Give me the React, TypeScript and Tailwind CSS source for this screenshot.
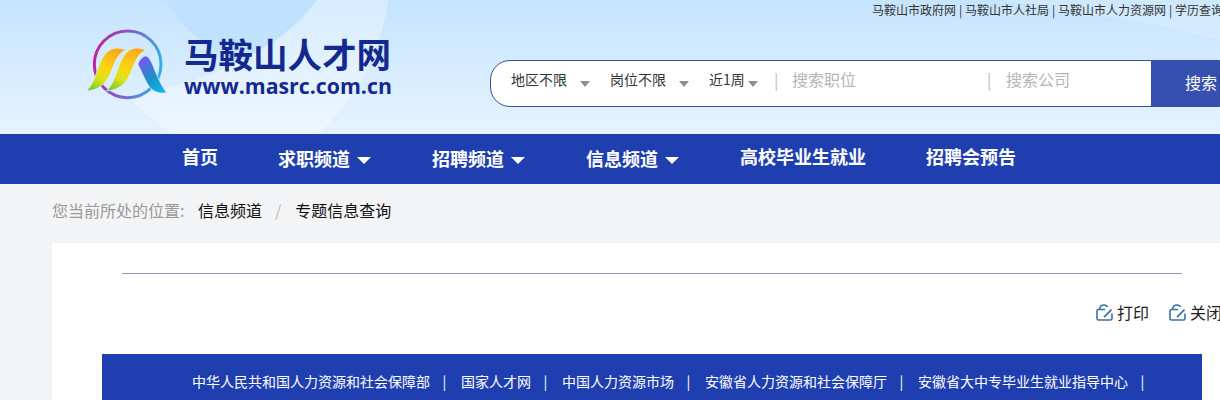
const sans = 'font-["Noto_Sans_CJK_SC","Liberation_Sans",sans-serif]'

const navItems = [
  { label: '首页', left: 'w-[96px] -mt-[6px]', caret: false },
  { label: '求职频道', left: 'w-[154px] -mt-[2px]', caret: true },
  { label: '招聘频道', left: 'w-[154px] -mt-[2px]', caret: true },
  { label: '信息频道', left: 'w-[154px] -mt-[2px]', caret: true },
  { label: '高校毕业生就业', left: 'w-[186px] -mt-[6px]', caret: false },
  { label: '招聘会预告', left: 'w-[120px] -mt-[6px]', caret: false },
]

const links = [
  '中华人民共和国人力资源和社会保障部',
  '国家人才网',
  '中国人力资源市场',
  '安徽省人力资源和社会保障厅',
  '安徽省大中专毕业生就业指导中心',
]

function Logo() {
  return (
    <svg viewBox="0 0 300 240" className="w-[100px] h-[80px] shrink-0">
      <defs>
        <linearGradient id="ring" x1="0" y1="0.3" x2="1" y2="0.5">
          <stop offset="0" stopColor="#c21f9c" />
          <stop offset="0.5" stopColor="#7f62c8" />
          <stop offset="1" stopColor="#2fb2ec" />
        </linearGradient>
        <linearGradient id="leaf" x1="0.7" y1="0" x2="0.2" y2="1">
          <stop offset="0" stopColor="#fba91c" />
          <stop offset="0.45" stopColor="#fbd512" />
          <stop offset="0.72" stopColor="#dce31a" />
          <stop offset="1" stopColor="#7fcb2f" />
        </linearGradient>
        <linearGradient id="blade" x1="0.2" y1="0" x2="0.8" y2="1">
          <stop offset="0" stopColor="#7a55ee" />
          <stop offset="0.55" stopColor="#1c8fc8" />
          <stop offset="1" stopColor="#10b4e4" />
        </linearGradient>
      </defs>
      <circle cx="143" cy="118" r="100" fill="none" stroke="url(#ring)" strokeWidth="9" />
      {/* halo keeps the ring from touching the leaf tips */}
      <path d="M22 197C36 182 46 160 55 130C66 98 82 72 104 71C118 70 128 72 136 76C118 82 108 100 97 128C82 168 66 192 22 197Z" fill="url(#leaf)" stroke="#dceeff" strokeWidth="4" paintOrder="stroke" />
      <path d="M82 197C96 182 106 160 115 130C126 98 142 72 164 71C178 70 188 72 196 76C178 82 168 100 157 128C142 168 126 192 82 197Z" fill="url(#leaf)" stroke="#dceeff" strokeWidth="4" paintOrder="stroke" />
      <path d="M175 118C178 108 188 94 198 94C206 96 212 108 218 122C228 148 242 180 258 202C236 206 218 198 208 184C196 166 186 140 175 118Z" fill="url(#blade)" stroke="#dceeff" strokeWidth="4" paintOrder="stroke" />
    </svg>
  )
}

function PrintIcon() {
  return (
    <svg viewBox="0 0 17 17" className="w-[17px] h-[17px] shrink-0" fill="none" stroke="#3d6fa8" strokeWidth="1.6">
      <path d="M9 5.5H2.6C1.7 5.5 1 6.2 1 7.1V14.4C1 15.3 1.7 16 2.6 16H14.4C15.3 16 16 15.3 16 14.4V9.5" />
      <path d="M3.5 5.5C3.7 2.8 5.5 1 8 1C9.6 1 10.8 1.7 11.6 2.9" />
      <path d="M8 13.2L15.5 5.7" strokeWidth="1.8" />
    </svg>
  )
}

function Caret({ close }: { close?: boolean }) {
  return (
    <span className={`${close ? 'ml-[3px]' : 'ml-[13px]'} mt-[10px] border-x-[5px] border-t-[6px] border-x-transparent border-t-[#8f8f8f]`} />
  )
}

export default function App() {
  return (
    <div className={`${sans} w-[1220px] h-[400px] overflow-hidden bg-[#f3f4f6] text-[#333]`}>
      {/* Header */}
      <header className="relative h-[134px] overflow-hidden bg-gradient-to-b from-[#c5e4fe] to-[#e6f3ff]">
        <svg viewBox="0 0 1220 134" className="absolute inset-0 w-full h-full">
          <path d="M388 0C382 50 356 100 318 134H172C150 118 136 106 128 96C170 90 215 75 245 58C280 40 305 20 316 0Z" fill="#ffffff" fillOpacity="0.32" />
          <path d="M165 0C185 30 205 50 240 62C270 45 300 25 316 0Z" fill="#bcdffd" fillOpacity="0.7" />
          <path d="M1000 0H1220V40C1150 20 1070 12 1000 0Z" fill="#ffffff" fillOpacity="0.16" />
        </svg>
        <div className="relative">
          <div className="pl-[872px] whitespace-nowrap text-xs leading-5 h-5 [word-spacing:0.2px]">
            马鞍山市政府网 | 马鞍山市人社局 | 马鞍山市人力资源网 | 学历查询
          </div>
          <div className="flex items-start">
            <div className="ml-[80px] mt-[5px] w-[100px]">
              <Logo />
            </div>
            <div className="ml-[4px] mt-[13px] w-[306px] text-[#14298f]">
              <div className="text-[34.5px] leading-[40px] font-bold whitespace-nowrap">马鞍山人才网</div>
              <div className="text-[21.3px] leading-[26px] font-bold font-['Open_Sans'] whitespace-nowrap">www.masrc.com.cn</div>
            </div>
            {/* Search */}
            <div className="mt-[40px] flex h-[47px] w-[730px] shrink-0 rounded-l-[20px] border border-[#34509f] bg-white">
              <div className="flex items-center pl-[20px] w-[660px] pb-[9px]">
                <span className="flex items-center w-[99px] text-sm text-[#333]">地区不限<Caret /></span>
                <span className="flex items-center w-[99px] text-sm text-[#333]">岗位不限<Caret /></span>
                <span className="flex items-center w-[65px] text-sm text-[#333]">近1周<Caret close /></span>
                <span className="text-[#bbb] text-base w-[18px]">|</span>
                <span className="w-[195px] text-base text-[#b5b5b5]">搜索职位</span>
                <span className="text-[#bbb] text-base w-[19px]">|</span>
                <span className="text-base text-[#b5b5b5]">搜索公司</span>
              </div>
              <div className="flex-1 -my-px bg-[#3650b0] text-white text-base pl-[34px] pb-[4px] flex items-center">搜索</div>
            </div>
          </div>
        </div>
      </header>

      {/* Nav */}
      <nav className="flex h-[50px] items-center bg-[#1f3fb0] pl-[182px] text-white">
        {navItems.map((n) => (
          <div key={n.label} className={`${n.left} shrink-0 flex items-center text-lg font-bold whitespace-nowrap`}>
            {n.label}
            {n.caret && <span className="ml-[7px] mt-[4px] border-x-[7px] border-t-[7px] border-x-transparent border-t-white" />}
          </div>
        ))}
      </nav>

      {/* Breadcrumb */}
      <div className="flex h-[59px] items-center pl-[52px] pb-[8px] text-base">
        <span className="text-[#999] w-[146px]">您当前所处的位置:</span>
        <span className="text-[#111]">信息频道</span>
        <span className="text-[#bbb] ml-[13px] mr-[14px]">/</span>
        <span className="text-[#111]">专题信息查询</span>
      </div>

      {/* Card */}
      <main className="ml-[52px] w-[1200px] bg-white px-[50px] pt-[30px]">
        <div className="mx-[20px] border-t border-[#8b98b8]" />
        <div className="flex h-[80px] items-start pt-[26px] pl-[994px] whitespace-nowrap text-base text-[#222]">
          <span className="flex items-center gap-[4px] w-[73px] shrink-0"><PrintIcon />打印</span>
          <span className="flex items-center gap-[4px] shrink-0"><PrintIcon />关闭</span>
        </div>
        <div className="flex h-[60px] items-start pt-[17px] pl-[90px] bg-[#1f3fb0] text-sm text-white whitespace-nowrap">
          {links.map((l) => (
            <span key={l} className="flex items-center">
              {l}
              <span className="w-[31px] pr-[2px] text-center">|</span>
            </span>
          ))}
        </div>
      </main>
    </div>
  )
}
